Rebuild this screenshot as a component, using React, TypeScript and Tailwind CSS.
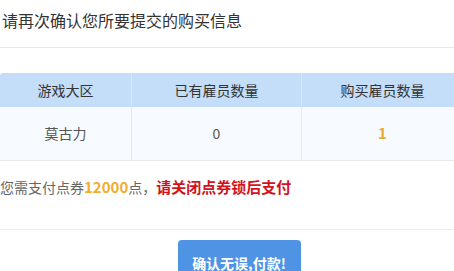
export default function App() {
  const font = { fontFamily: '"Microsoft YaHei", "Noto Sans CJK SC", sans-serif' };
  return (
    <div className="w-[454px] h-[271px] overflow-hidden bg-white" style={font}>
      <div className="pt-[9px] pl-[2px] text-[16px] leading-[22px] text-[#333]">请再次确认您所要提交的购买信息</div>
      <div className="mt-[16px] h-px bg-[#e8e8e8]" />
      <div className="mt-[25px] w-[463px] rounded-t-[3px] overflow-hidden">
        <div className="flex h-[34px] bg-[#c4ddf8] text-[14px] text-[#333]">
          <div className="w-[131px] flex items-center justify-center">游戏大区</div>
          <div className="w-[170px] flex items-center justify-center border-l border-[#d8e6f5]">已有雇员数量</div>
          <div className="w-[162px] flex items-center justify-center border-l border-[#d8e6f5]">购买雇员数量</div>
        </div>
        <div className="flex h-[54px] bg-[#f7fbff] text-[14px] text-[#555] border-b border-[#e6e9ee]">
          <div className="w-[131px] flex items-center justify-center">莫古力</div>
          <div className="w-[170px] flex items-center justify-center border-l border-[#e6e9ee]">0</div>
          <div className="w-[162px] flex items-center justify-center border-l border-[#e6e9ee] text-[#eba932] font-bold text-[15px]">1</div>
        </div>
      </div>
      <div className="mt-[16px] text-[14px] leading-[20px] text-[#666]">
        您需支付点券<span className="font-bold text-[#f0ad2e] text-[15px]">12000</span>点，<span className="font-bold text-[#d1141c] text-[15px]">请关闭点券锁后支付</span>
      </div>
      <div className="mt-[32px] h-px bg-[#ececec]" />
      <div className="mt-[10px] flex justify-center pl-[24px]">
        <div className="w-[123px] h-[40px] rounded-[4px] bg-[#4e93e4] text-white font-bold text-[14px] flex items-center justify-center pt-[6px]">确认无误,付款!</div>
      </div>
    </div>
  );
}
